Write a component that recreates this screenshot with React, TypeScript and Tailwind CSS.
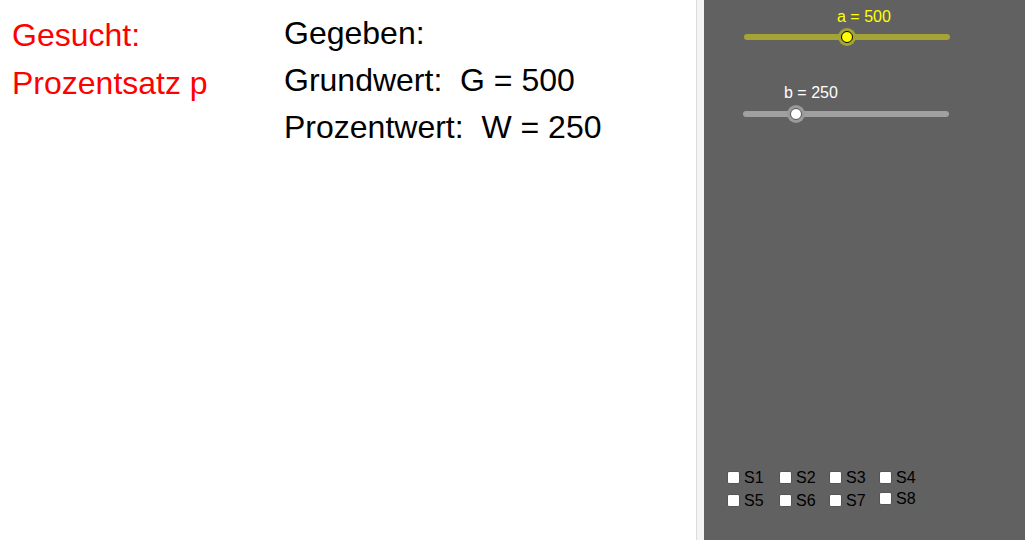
import React from "react";

const font = { fontFamily: '"Liberation Sans", Arial, sans-serif' };

function Box({ label, up }: { label: string; up?: boolean }) {
  return (
    <div className={`flex items-center gap-[4px] ${up ? "-translate-y-[2px]" : ""}`}>
      <div className="w-[13px] h-[13px] bg-white border border-[#555555] rounded-[2px]" />
      <span className="text-[16px] leading-[18px] text-black">{label}</span>
    </div>
  );
}

export default function App() {
  const cols = ["w-[52px]", "w-[50px]", "w-[50px]", "w-[50px]"];
  const row1 = ["S1", "S2", "S3", "S4"];
  const row2 = ["S5", "S6", "S7", "S8"];
  return (
    <div className="flex w-[1025px] h-[540px] overflow-hidden bg-white" style={font}>
      <div className="w-[696px] h-full flex">
        <div className="pl-[12px] pt-[11px] w-[284px] text-[32px] leading-[48px] text-[#ff0000]">
          <div>Gesucht:</div>
          <div>Prozentsatz p</div>
        </div>
        <div className="pt-[10px] text-[32px] leading-[47px] text-black whitespace-pre">
          <div>Gegeben:</div>
          <div>Grundwert:  G = 500</div>
          <div>Prozentwert:  W = 250</div>
        </div>
      </div>
      <div className="w-[1px] h-full bg-[#dcdcdc]" />
      <div className="w-[7px] h-full bg-[#f4f4f4]" />
      <div className="flex-1 h-full bg-[#616161] flex flex-col">
        <div className="ml-[40px] w-[206px] mt-[8px]">
          <div className="pl-[93px] text-[16px] leading-[18px] text-[#ffff00]">a = 500</div>
          <div className="relative mt-[1px] h-[20px] flex items-center">
            <div className="w-full h-[6px] rounded-full bg-[#a3a336]" />
            <div className="absolute left-[94px] top-[1px] w-[18px] h-[18px] rounded-full bg-[#a3a336] flex items-center justify-center">
              <div className="w-[12px] h-[12px] rounded-full bg-[#ffff00] border border-black" />
            </div>
          </div>
        </div>
        <div className="ml-[39px] w-[206px] mt-[37px]">
          <div className="pl-[41px] text-[16px] leading-[18px] text-white">b = 250</div>
          <div className="relative mt-[2px] h-[20px] flex items-center">
            <div className="w-full h-[6px] rounded-full bg-[#a0a0a0]" />
            <div className="absolute left-[44px] top-[1px] w-[18px] h-[18px] rounded-full bg-[#9a9a9a] flex items-center justify-center">
              <div className="w-[12px] h-[12px] rounded-full bg-white border border-[#555555]" />
            </div>
          </div>
        </div>
        <div className="mt-auto pb-[28px] pl-[23px]">
          <div className="flex h-[23px] items-center">
            {row1.map((l, i) => (
              <div key={l} className={cols[i]}>
                <Box label={l} />
              </div>
            ))}
          </div>
          <div className="flex h-[23px] items-center">
            {row2.map((l, i) => (
              <div key={l} className={cols[i]}>
                <Box label={l} up={l === "S8"} />
              </div>
            ))}
          </div>
        </div>
      </div>
    </div>
  );
}
